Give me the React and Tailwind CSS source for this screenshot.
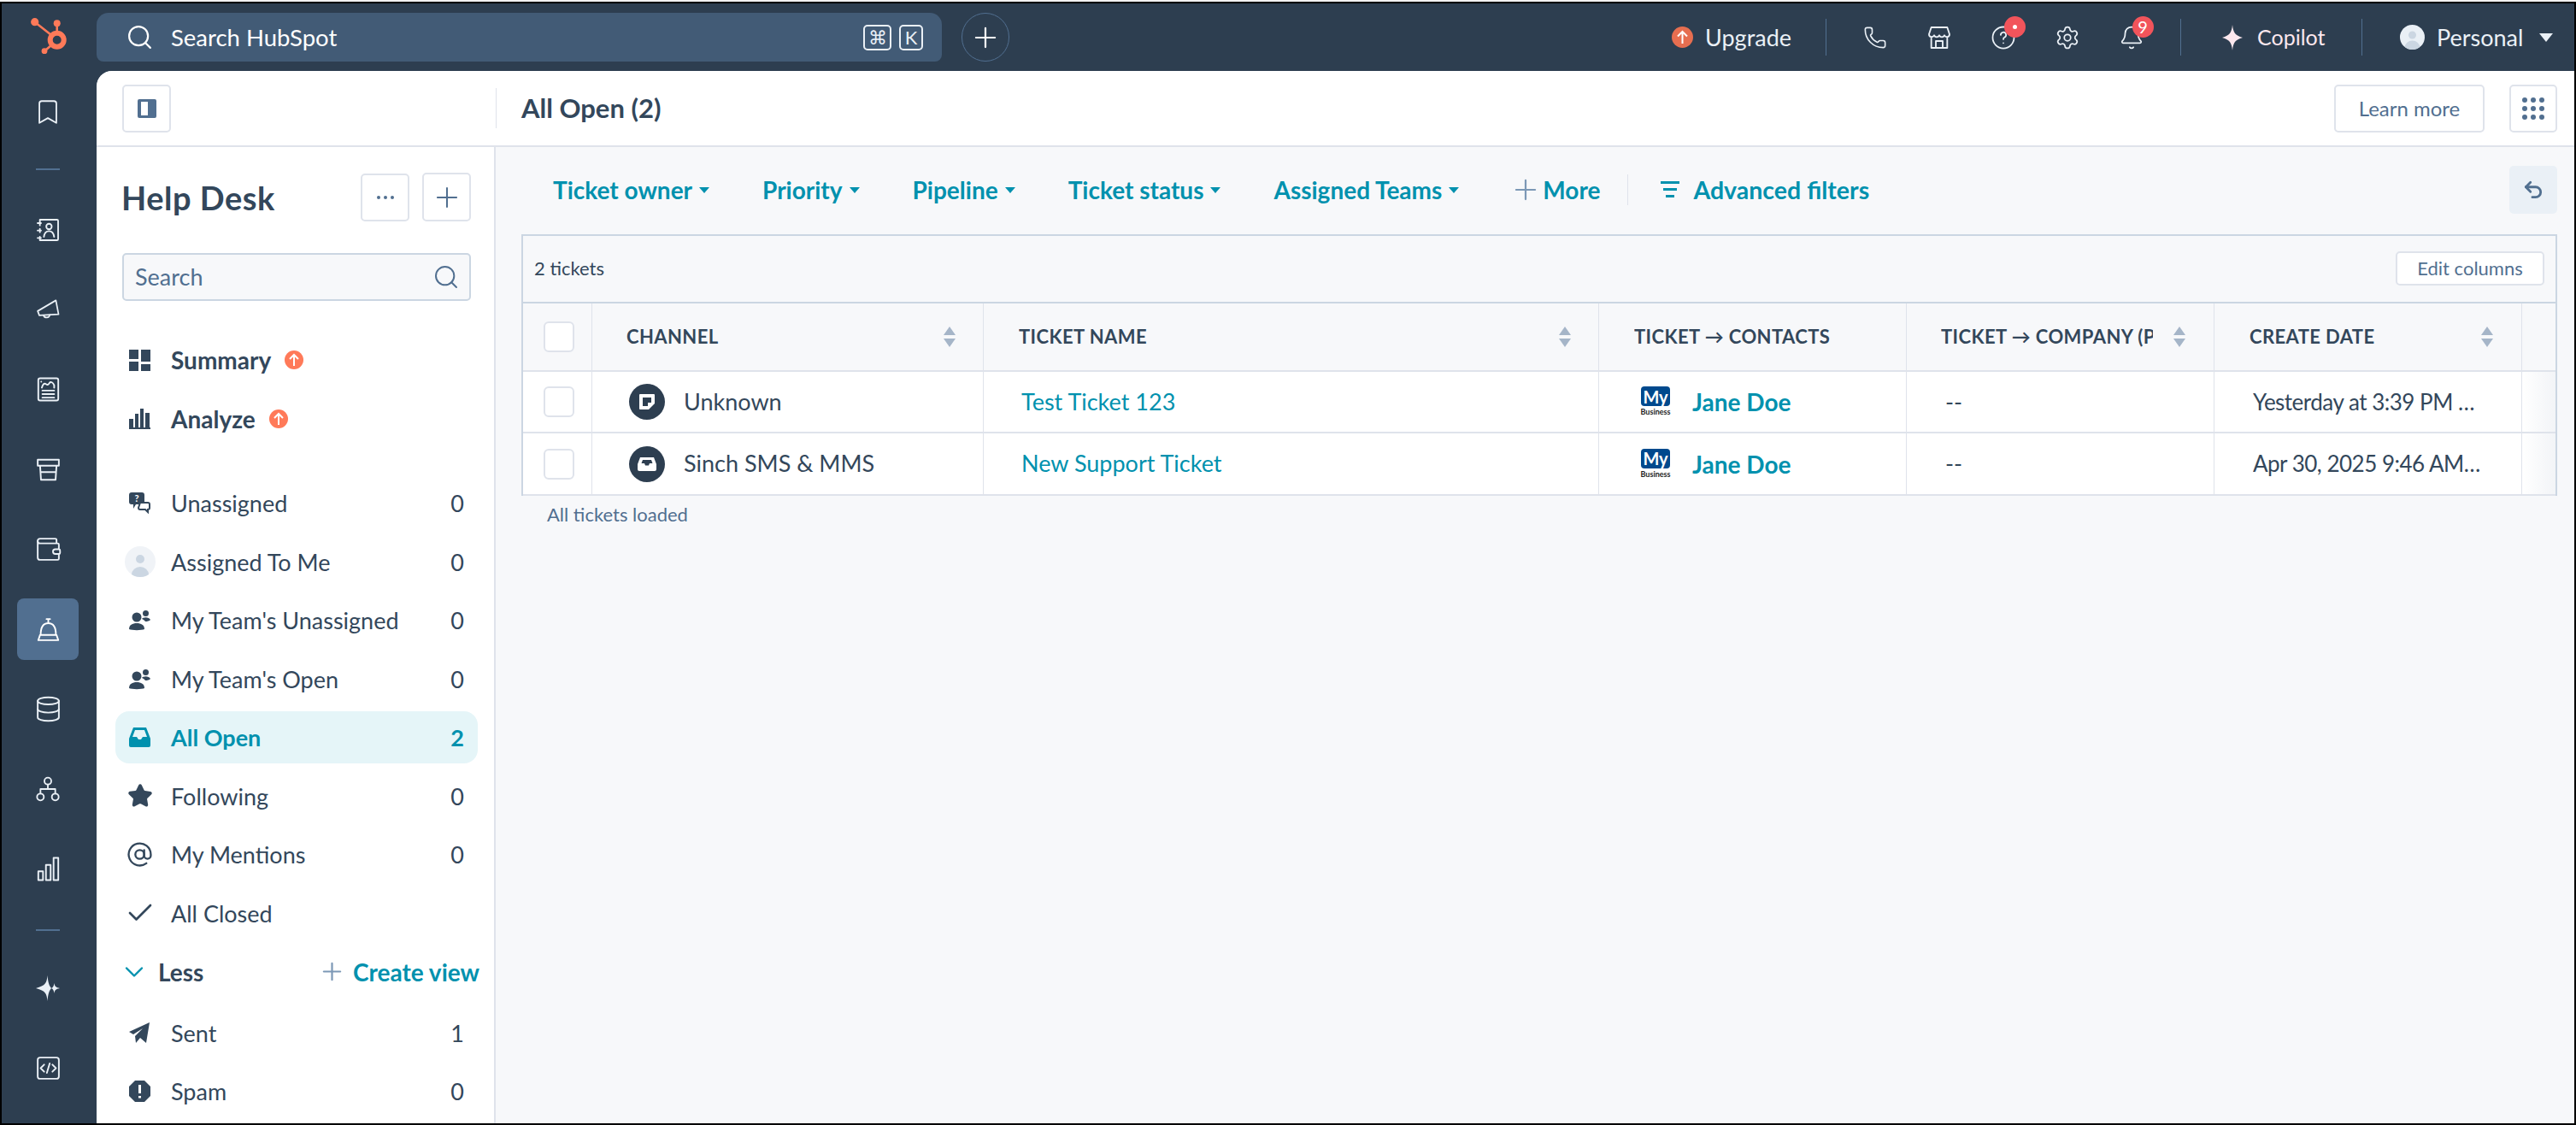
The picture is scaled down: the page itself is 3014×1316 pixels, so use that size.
import React from "react";
import { Search, Phone, Settings, Bell, Bookmark, Wallet, Database, ChevronDown, Plus, Undo2, Check, Star, AtSign } from "lucide-react";

const Ico = ({ s = 33, w = 1.4, c = "#eaf0f6", vb = "0 0 24 24", children, className = "" }) => (
  <svg width={s} height={s} viewBox={vb} fill="none" stroke={c} strokeWidth={w} strokeLinecap="round" strokeLinejoin="round" className={`shrink-0 ${className}`}>{children}</svg>
);

const Logo = () => (
  <svg width="80" height="70" viewBox="0 0 80 70" fill="#ff7a59">
    <circle cx="66.7" cy="46.7" r="8" fill="none" stroke="#ff7a59" strokeWidth="6" />
    <circle cx="66.7" cy="27.3" r="4" />
    <circle cx="40.7" cy="25.7" r="4.6" />
    <circle cx="52" cy="59.7" r="3.4" />
    <path d="M66.7 28V38M41 26 60 41M52 59.7 60 53" stroke="#ff7a59" strokeWidth="2.6" />
  </svg>
);

const Contacts = () => (
  <Ico s={32}><path d="M5 3h15a1 1 0 0 1 1 1v16a1 1 0 0 1-1 1H5v-3M5 14v-3M5 8V3" /><path d="M3 6h3M3 12.5h3M3 19h3" /><circle cx="13" cy="9" r="2.4" /><path d="M8.5 18c.5-3.5 2.5-5 4.5-5s4 1.5 4.5 5" /></Ico>
);
const Horn = () => (
  <Ico s={30}><path d="M2.500 13.500 19.500 3.500 22 16.500 4 17.500z" /><path d="M8 17.500a3 3 0 0 0 5.800-.400" /></Ico>
);
const Report = () => (
  <Ico><rect x="3.5" y="2.5" width="17" height="19" rx="1.5" /><path d="M7 16h10M7 19h10M7 13h10M6.5 10.5c1-3 2-4 3.5-3s2 .5 3-1 3-.5 4 2v2" /><path d="M6 5.5h.01" /></Ico>
);
const Shop = () => (
  <Ico><path d="M3 3.5h18v5H3zM5 8.5l.8 12h12.4l.8-12M5.600 14h12.800" /></Ico>
);
const Network = () => (
  <Ico s={32}><circle cx="12" cy="5" r="3" /><circle cx="5.5" cy="19" r="3" /><circle cx="18.5" cy="19" r="3" /><path d="M12 8v4M5.5 16v-4h13v4" /></Ico>
);
const Bars = () => (
  <Ico><rect x="3.5" y="14" width="4" height="7.5" /><rect x="10" y="8.5" width="4" height="13" /><rect x="16.5" y="2.5" width="4" height="19" /></Ico>
);
const Code = () => (
  <Ico><rect x="3" y="3" width="18" height="18" rx="2" /><path d="M8.5 9 5.5 12l3 3M15.5 9l3 3-3 3M13.2 8l-2.4 8" /></Ico>
);
const Sparkles = () => (
  <svg width="28" height="30" viewBox="0 0 28 30" fill="#eaf0f6"><path d="M13.500 0c.8 8.500 2 12 4.500 15-2.500 3-3.700 6.500-4.500 15-.8-8.500-2-12-13.500-15 11.500-3 12.700-6.500 13.500-15z" /><path d="M21.500 9c.5 3.500 1.500 5 6.500 6-5 1-6 2.500-6.500 6-.5-3.500-1.500-5-3.500-6 2-1 3-2.500 3.500-6z" /></svg>
);
const BellDesk = () => (
  <Ico c="#ffffff"><path d="M12 3.500V6M10.500 3h3M5.500 16.500C5.500 10 8 6.500 12 6.500s6.500 3.500 6.500 10M3.500 21l1.500-4.500h14L20.500 21z" /></Ico>
);

const Slot = ({ h, children, active }) => (
  <div className={`w-full flex items-center justify-center shrink-0 pr-[3px] ${h}`}>
    {active ? <div className="w-[72px] h-[72px] rounded-[8px] bg-[#516f90] flex items-center justify-center">{children}</div> : children}
  </div>
);
const RailRule = ({ h }) => (
  <Slot h={h}><div className="w-[28px] h-[2px] bg-[#516f90]" /></Slot>
);

const Rail = () => (
  <div className="w-[111px] shrink-0 bg-[#2d3e50] flex flex-col pt-[1px] overflow-hidden">
    <Slot h="h-[94px]"><Bookmark size={34} strokeWidth={1.3} color="#eaf0f6" /></Slot>
    <div className="h-[44px] shrink-0 pb-[4px] pr-[3px] flex items-center justify-center"><div className="w-[28px] h-[2px] bg-[#516f90]" /></div>
    <Slot h="h-[93.5px]"><Contacts /></Slot>
    <Slot h="h-[93.5px]"><Horn /></Slot>
    <Slot h="h-[93.5px]"><Report /></Slot>
    <Slot h="h-[93.5px]"><Shop /></Slot>
    <Slot h="h-[93.5px]"><Wallet size={33} strokeWidth={1.4} color="#eaf0f6" /></Slot>
    <Slot h="h-[93.5px]" active><BellDesk /></Slot>
    <Slot h="h-[93.5px]"><Database size={33} strokeWidth={1.4} color="#eaf0f6" /></Slot>
    <Slot h="h-[93.5px]"><Network /></Slot>
    <Slot h="h-[93.5px]"><Bars /></Slot>
    <RailRule h="h-[49px]" />
    <Slot h="h-[86px]"><Sparkles /></Slot>
    <Slot h="h-[101px]"><Code /></Slot>
  </div>
);

const Key = ({ children, w }) => (
  <span className={`h-[30px] ${w} rounded-[5px] border-2 border-[#eaf0f6] text-[#eaf0f6] text-[22px] leading-none flex items-center justify-center`}>{children}</span>
);
const Sep = () => <div className="w-[1px] h-[43px] bg-[#516f90] shrink-0" />;
const Badge = ({ children }) => (
  <span className="absolute left-[14px] top-[-12px] w-[25px] h-[25px] rounded-full bg-[#f2545b] text-white text-[20px] leading-none flex items-center justify-center">{children}</span>
);
const TopIcon = ({ children, badge }) => (
  <div className="w-[75px] flex items-center justify-center shrink-0">
    <div className="relative w-[26px] h-[26px] flex items-center justify-center">{children}{badge}</div>
  </div>
);

const Avatar = ({ s = 29 }) => (
  <svg width={s} height={s} viewBox="0 0 29 29"><defs><clipPath id={`av${s}`}><circle cx="14.5" cy="14.5" r="14.5" /></clipPath></defs><g clipPath={`url(#av${s})`}><rect width="29" height="29" fill="#eaf0f6" /><circle cx="14.500" cy="12" r="4.500" fill="#cbd6e2" /><ellipse cx="14.500" cy="27" rx="9" ry="8.500" fill="#cbd6e2" /></g></svg>
);

const TopBar = () => (
  <div className="h-[79px] shrink-0 bg-[#2d3e50] flex items-center">
    <div className="w-[111px] h-[79px] shrink-0 relative overflow-hidden"><div className="absolute left-[-2px] top-[-4px]"><Logo /></div></div>
    <div className="w-[989px] h-[57px] shrink-0 rounded-t-[14px] rounded-b-[8px] bg-[#425b76] flex items-center pl-[34px] pr-[22px]">
      <Search size={33} strokeWidth={1.6} color="#ffffff" />
      <span className="ml-[20px] text-[27.500px] text-white leading-none">Search HubSpot</span>
      <div className="ml-auto flex gap-[9px]"><Key w="w-[33px]">⌘</Key><Key w="w-[28px]">K</Key></div>
    </div>
    <div className="ml-[23px] w-[56px] h-[57px] rounded-full border border-[#516f90] flex items-center justify-center"><Plus size={38} strokeWidth={1.4} color="#ffffff" /></div>
    <div className="ml-auto flex items-center pr-[25px]">
      <svg width="25" height="25" viewBox="0 0 25 25"><circle cx="12.500" cy="12.500" r="12.500" fill="#e66e50" /><path d="M12.500 20V6M7 11.500l5.500-5.500 5.500 5.500" stroke="#ffffff" strokeWidth="2" fill="none" /></svg>
      <span className="ml-[14px] w-[97px] text-[27px] leading-none text-[#eaf0f6]">Upgrade</span>
      <div className="ml-[44px]"><Sep /></div>
      <div className="ml-[19px] flex">
        <TopIcon><Phone size={28} strokeWidth={1.4} color="#eaf0f6" className="shrink-0" /></TopIcon>
        <TopIcon><Ico s={32}><path d="M5 3h14l2 6c0 3-3.400 3-4.500 1-1 2-3.500 2-4.500 0-1 2-3.500 2-4.500 0C6.400 12 3 12 3 9zM5 12.500V21h14v-8.500M9 21v-6h6v6" /></Ico></TopIcon>
        <TopIcon badge={<Badge><span className="block w-[5px] h-[5px] rounded-full bg-white" /></Badge>}><Ico s={30}><circle cx="12" cy="12" r="10" /><path d="M9.500 9.500a2.500 2.500 0 1 1 3.500 2.300c-.7.300-1 .8-1 1.700M12 17h.01" /></Ico></TopIcon>
        <TopIcon><Settings size={30} strokeWidth={1.4} color="#eaf0f6" className="shrink-0" /></TopIcon>
        <TopIcon badge={<Badge>9</Badge>}><Bell size={30} strokeWidth={1.4} color="#eaf0f6" className="shrink-0" /></TopIcon>
      </div>
      <div className="ml-[20px]"><Sep /></div>
      <svg className="ml-[48px]" width="24" height="30" viewBox="0 0 24 30" fill="#fde8ee"><path d="M12 0c1 9 3 12.500 12 15-9 2.500-11 6-12 15-1-9-3-12.500-12-15 9-2.500 11-6 12-15z" /></svg>
      <span className="ml-[17px] w-[78px] text-[25px] leading-none text-[#fde8ee]">Copilot</span>
      <div className="ml-[44px]"><Sep /></div>
      <div className="ml-[44px]"><Avatar /></div>
      <span className="ml-[14px] w-[103px] text-[27px] leading-none text-[#eaf0f6]">Personal</span>
      <span className="ml-[17px] w-0 h-0 border-x-[8px] border-x-transparent border-t-[10px] border-t-[#eaf0f6]" />
    </div>
  </div>
);

const Outline = ({ className = "", children }) => (
  <button className={`rounded-[5px] border-2 border-[#dfe3eb] bg-white flex items-center justify-center shrink-0 ${className}`}>{children}</button>
);

const Header = () => (
  <div className="h-[89px] shrink-0 bg-white border-b-2 border-[#dfe3eb] flex items-center rounded-tl-[18px] pl-[30px] pr-[20px]">
    <Outline className="w-[57px] h-[56px]"><svg width="22" height="22" viewBox="0 0 22 22"><rect width="22" height="22" rx="2" fill="#516f90" /><rect x="4" y="3" width="8" height="16" fill="#ffffff" /></svg></Outline>
    <div className="ml-[380px] w-[1px] h-[47px] bg-[#dfe3eb]" />
    <div className="ml-[29px] text-[31px] font-bold text-[#33475b] leading-none">All Open (2)</div>
    <Outline className="ml-auto w-[176px] h-[56px] text-[24px] text-[#516f90]">Learn more</Outline>
    <Outline className="ml-[29px] w-[56px] h-[56px]">
      <div className="grid grid-cols-3 gap-[4px]">
        {[...Array(9)].map((_, i) => <span key={i} className="w-[6px] h-[6px] rounded-full bg-[#516f90]" />)}
      </div>
    </Outline>
  </div>
);

const Up = ({ className = "" }) => (
  <svg className={className} width="22" height="22" viewBox="0 0 22 22"><circle cx="11" cy="11" r="11" fill="#ff7a59" /><path d="M11 18V5M6 10l5-5 5 5" stroke="#ffffff" strokeWidth="2" fill="none" /></svg>
);
const F = ({ children, s = 25, vb = "0 0 25 25" }) => <svg width={s} height={s} viewBox={vb} fill="#33475b" className="shrink-0">{children}</svg>;
const ITeam = () => (
  <F><circle cx="9" cy="9" r="5.500" /><path d="M0 23c0-5 4-7 9-7s9 2 9 7c-3 1.500-15 1.500-18 0z" /><circle cx="19.500" cy="4.500" r="3.500" /><path d="M15 11c1-2 8-3 10 1-1 1.500-4 2-6 2-1-1.500-2.500-2.500-4-3z" /></F>
);

const Row = ({ icon, label, count, active }) => (
  <div className="h-[68.5px] shrink-0 flex items-center">
    <div className={`ml-[22px] mr-[19px] w-full h-[61px] rounded-[16px] flex items-center pl-[16px] pr-[16px] text-[27px] leading-none ${active ? "bg-[#e5f5f8] text-[#0091ae] font-bold" : "text-[#33475b]"}`}>
      <div className="w-[25px] h-[25px] flex items-center justify-center shrink-0">{icon}</div>
      <span className="ml-[24px]">{label}</span>
      {count !== undefined && <span className="ml-auto">{count}</span>}
    </div>
  </div>
);

const Sidebar = () => (
  <div className="w-[467px] shrink-0 bg-white border-r-2 border-[#dfe3eb] flex flex-col overflow-hidden">
    <div className="pt-[30px] pl-[29px] pr-[27px] flex items-center">
      <div className="text-[38px] tracking-[0.5px] font-bold text-[#33475b] leading-none">Help Desk</div>
      <Outline className="ml-auto w-[57px] h-[56px]"><span className="flex gap-[4px]"><i className="w-[4px] h-[4px] rounded-full bg-[#516f90]" /><i className="w-[4px] h-[4px] rounded-full bg-[#516f90]" /><i className="w-[4px] h-[4px] rounded-full bg-[#516f90]" /></span></Outline>
      <Outline className="ml-[15px] w-[57px] h-[57px]"><Plus size={38} strokeWidth={1.3} color="#516f90" /></Outline>
    </div>
    <div className="mt-[37px] ml-[30px] mr-[27px] h-[56px] shrink-0 rounded-[5px] border-2 border-[#cbd6e2] bg-[#f7f8fa] flex items-center pl-[13px] pr-[11px] text-[27px] text-[#516f90]">
      <span>Search</span>
      <Search size={32} strokeWidth={1.5} color="#516f90" className="ml-auto" />
    </div>
    <div className="mt-[35px]">
      <div className="h-[68.5px] flex items-center pl-[38px] text-[28px] font-bold text-[#33475b] leading-none">
        <F><rect x="0" y="0" width="11" height="11" /><rect x="14" y="0" width="11" height="14" /><rect x="0" y="14" width="11" height="11" /><rect x="14" y="17" width="11" height="8" /></F>
        <span className="ml-[24px]">Summary</span><Up className="ml-[16px]" />
      </div>
      <div className="h-[68.5px] flex items-center pl-[38px] text-[28px] font-bold text-[#33475b] leading-none">
        <F><rect x="0" y="13" width="5" height="10" /><rect x="7" y="7" width="4" height="16" /><rect x="13" y="1" width="4" height="22" /><rect x="19" y="6" width="5" height="17" /><rect x="0" y="23" width="25" height="2" /></F>
        <span className="ml-[24px]">Analyze</span><Up className="ml-[16px]" />
      </div>
    </div>
    <div className="mt-[30.5px] flex flex-col">
      <Row label="Unassigned" count="0" icon={<F><path d="M3 0h12a3 3 0 0 1 3 3v8a3 3 0 0 1-3 3H8l-3 5v-5H3a3 3 0 0 1-3-3V3a3 3 0 0 1 3-3z" /><path d="M13 12h9a2 2 0 0 1 2 2v4a2 2 0 0 1-2 2v3l-3-3h-6a2 2 0 0 1-2-2z" fill="#ffffff" stroke="#33475b" strokeWidth="2" /><text x="9" y="11" fontSize="11" fontWeight="700" textAnchor="middle" fill="#ffffff">?</text></F>} />
      <Row label="Assigned To Me" count="0" icon={<div className="shrink-0 flex items-center justify-center -mx-[5px]"><svg width="36" height="36" viewBox="0 0 36 36"><defs><clipPath id="am"><circle cx="18" cy="18" r="18" /></clipPath></defs><g clipPath="url(#am)"><rect width="36" height="36" fill="#f0f3f7" /><circle cx="18" cy="15" r="5" fill="#cbd6e2" /><ellipse cx="18" cy="33" rx="10" ry="9" fill="#cbd6e2" /></g></svg></div>} />
      <Row label="My Team's Unassigned" count="0" icon={<ITeam />} />
      <Row label="My Team's Open" count="0" icon={<ITeam />} />
      <Row active label="All Open" count="2" icon={<svg width="25" height="25" viewBox="0 0 25 25" fill="#0091ae" className="shrink-0"><path d="M5 1h15l5 13v8a2 2 0 0 1-2 2H2a2 2 0 0 1-2-2v-8zM7 4 4 12h5l2 3h3l2-3h5l-3-8z" fillRule="evenodd" /><path d="M7 6h11l1.500 4h-14z" fill="#e5f5f8" /></svg>} />
      <Row label="Following" count="0" icon={<Star size={30} fill="#33475b" color="#33475b" className="shrink-0" />} />
      <Row label="My Mentions" count="0" icon={<AtSign size={31} strokeWidth={1.8} color="#33475b" className="shrink-0" />} />
      <Row label="All Closed" icon={<Check size={36} strokeWidth={1.8} color="#33475b" className="shrink-0" />} />
      <div className="h-[68.5px] shrink-0 flex items-center pl-[26px] text-[28px] leading-none">
        <ChevronDown size={36} strokeWidth={1.6} color="#0091ae" className="shrink-0" />
        <span className="ml-[10px] font-bold text-[#33475b]">Less</span>
        <Plus size={33} strokeWidth={1.6} color="#7c98b6" className="ml-auto shrink-0" />
        <span className="ml-[8px] mr-[17px] font-bold text-[#0091ae]">Create view</span>
      </div>
      <div className="mt-[3px]">
        <Row label="Sent" count="1" icon={<F><path d="M24 0 20 24l-7-6-5 6-1-8 9-9-11 7-5-3z" /></F>} />
      </div>
      <Row label="Spam" count="0" icon={<F><path d="M7 0h11l7 7v11l-7 7H7l-7-7V7z" /><path d="M12.500 5v10M12.500 18v2.500" stroke="#ffffff" strokeWidth="3" /></F>} />
    </div>
  </div>
);

const Filter = ({ children }) => (
  <span className="flex items-center text-[28px] font-bold text-[#0091ae] leading-none">{children}<i className="ml-[8px] w-0 h-0 border-x-[6px] border-x-transparent border-t-[7px] border-t-[#0091ae]" /></span>
);

const Sort = () => (
  <span className="flex flex-col gap-[4px] shrink-0">
    <i className="w-0 h-0 border-x-[7px] border-x-transparent border-b-[10px] border-b-[#a5b5c8]" />
    <i className="w-0 h-0 border-x-[7px] border-x-transparent border-t-[10px] border-t-[#a5b5c8]" />
  </span>
);
const Cb = () => <span className="block w-[36px] h-[36px] rounded-[6px] border-2 border-[#dfe3eb] bg-white" />;

const Th = ({ label, pl = "pl-[41px]", pr = "pr-[32px]", sort = true, border = true }) => (
  <div className={`h-[80px] flex items-center bg-[#f7f8fa] border-b-2 border-[#dfe3eb] ${border ? "border-r" : ""} ${pl} ${pr}`}>
    <span className="flex-1 min-w-0 overflow-hidden whitespace-nowrap text-[22px] tracking-[0.4px] font-bold uppercase text-[#33475b] leading-[1.4]">{label}</span>
    {sort && <span className="ml-[24px]"><Sort /></span>}
  </div>
);
const Td = ({ children, h, border = true, className = "" }) => (
  <div className={`${h} flex items-center bg-white border-b-2 border-[#dfe3eb] min-w-0 ${border ? "border-r" : ""} ${className}`}>{children}</div>
);
const MyLogo = () => (
  <span className="flex flex-col items-center w-[34px] shrink-0 -mt-[2px]">
    <span className="w-[34px] h-[23px] rounded-[4px] bg-[#00498d] text-white text-[20px] font-bold leading-none flex items-center justify-center">My</span>
    <span className="text-[9px] font-bold leading-none text-[#222222] mt-[2px]">Business</span>
  </span>
);

const rows = [
  { h: "h-[72px]", ch: "Unknown", t: "Test Ticket 123", d: "Yesterday at 3:39 PM GMT+1", icon: "note" },
  { h: "h-[73px]", ch: "Sinch SMS & MMS", t: "New Support Ticket", d: "Apr 30, 2025 9:46 AM GMT+1", icon: "inbox" },
];

const Table = () => (
  <div>
    <div className="h-[79px] border-2 border-b-0 border-[#cbd6e2] bg-[#f7f8fa] flex items-center pl-[13px] pr-[13px] pb-[2px]">
      <span className="text-[22px] text-[#33475b] leading-none">2 tickets</span>
      <Outline className="ml-auto w-[174px] h-[40px] text-[22px] text-[#516f90]">Edit columns</Outline>
    </div>
    <div className="border-x-2 border-t-2 border-[#cbd6e2] grid grid-cols-[81px_458px_720px_360px_360px_360px_39px]">
      <div className="h-[80px] flex items-center justify-center pl-[4px] bg-[#f7f8fa] border-b-2 border-r border-[#dfe3eb]"><Cb /></div>
      <Th label="Channel" pl="pl-[40px]" pr="pr-[32px]" />
      <Th label="Ticket name" pr="pr-[32px]" />
      <Th label="Ticket → Contacts" sort={false} />
      <Th label="Ticket → Company (Primary)" pl="pl-[40px]" pr="pr-[33px]" />
      <Th label="Create date" pr="pr-[33px]" />
      <div className="h-[80px] bg-[#f7f8fa] border-b-2 border-[#dfe3eb]" />
      {rows.map((r) => (
        <React.Fragment key={r.t}>
          <Td h={r.h} className="justify-center pl-[4px]"><Cb /></Td>
          <Td h={r.h} className="pl-[43px] text-[27px] text-[#33475b]">
            <span className="w-[42px] h-[42px] rounded-full bg-[#2d3e50] flex items-center justify-center shrink-0">
              {r.icon === "note"
                ? <svg width="18" height="18" viewBox="0 0 18 18"><path d="M1 0h16a1 1 0 0 1 1 1v10l-7 7H1a1 1 0 0 1-1-1V1a1 1 0 0 1 1-1z" fill="#ffffff" /><path d="M4 4h10v6h-4v4H4z" fill="#2d3e50" /></svg>
                : <svg width="22" height="16" viewBox="0 0 22 16"><path d="M3 0h16l3 8v6a2 2 0 0 1-2 2H2a2 2 0 0 1-2-2V8z" fill="#ffffff" /><path d="M6 3h10l1.500 4h-3.500l-1 2.500H9L8 7H4.500z" fill="#2d3e50" /></svg>}
            </span>
            <span className="ml-[22px] whitespace-nowrap">{r.ch}</span>
          </Td>
          <Td h={r.h} className="pl-[44px] text-[27px] text-[#0091ae]">{r.t}</Td>
          <Td h={r.h} className="pl-[49px]"><MyLogo /><span className="ml-[26px] text-[28px] font-bold text-[#0091ae]">Jane Doe</span></Td>
          <Td h={r.h} className="pl-[45px] text-[27px] text-[#33475b]">--</Td>
          <Td h={r.h} className="pl-[45px] pr-[44px] text-[26px] tracking-[-0.5px] text-[#33475b]"><span className="truncate">{r.d}</span></Td>
          <Td h={r.h} border={false} className="bg-linear-to-r from-white to-[#f2f4f7]" />
        </React.Fragment>
      ))}
    </div>
    <div className="pt-[11px] pl-[30px] text-[22px] leading-none text-[#516f90]">All tickets loaded</div>
  </div>
);

const Content = () => (
  <div className="flex-1 min-w-0 bg-[#f7f8fa] pl-[30px] pr-[20px]">
    <div className="h-[102px] flex items-center pl-[37px] pb-[2px]">
      <div className="flex items-center gap-[62px]">
        <Filter>Ticket owner</Filter>
        <Filter>Priority</Filter>
        <Filter>Pipeline</Filter>
        <Filter>Ticket status</Filter>
        <Filter>Assigned Teams</Filter>
      </div>
      <Plus size={38} strokeWidth={1.4} color="#7c98b6" className="ml-[59px] shrink-0" />
      <span className="ml-[1px] text-[28px] font-bold text-[#0091ae] leading-none">More</span>
      <div className="ml-[32px] w-[1px] h-[36px] bg-[#dfe3eb]" />
      <svg className="ml-[38px]" width="22" height="20" viewBox="0 0 22 20" fill="#0091ae"><rect width="22" height="3" /><rect x="3" y="8" width="16" height="3" /><rect x="6" y="16" width="10" height="3" /></svg>
      <span className="ml-[16px] text-[28.500px] font-bold text-[#0091ae] leading-none">Advanced filters</span>
      <div className="ml-auto w-[56px] h-[56px] rounded-[5px] bg-[#eaf0f6] flex items-center justify-center"><Undo2 size={26} strokeWidth={2.6} color="#516f90" /></div>
    </div>
    <Table />
  </div>
);

export default function App() {
  return (
    <div className="w-[3014px] h-[1316px] bg-black flex flex-col overflow-hidden [font-family:Lato,sans-serif]">
      <div className="h-[2px] bg-[#f2f2f2] shrink-0" />
      <div className="flex-1 min-h-0 mx-[2px] my-[2px] bg-[#2d3e50] flex flex-col">
        <TopBar />
        <div className="flex-1 min-h-0 flex">
          <Rail />
          <div className="flex-1 min-w-0 flex flex-col bg-white rounded-tl-[18px] overflow-hidden">
            <Header />
            <div className="flex-1 min-h-0 flex">
              <Sidebar />
              <Content />
            </div>
          </div>
        </div>
      </div>
    </div>
  );
}
